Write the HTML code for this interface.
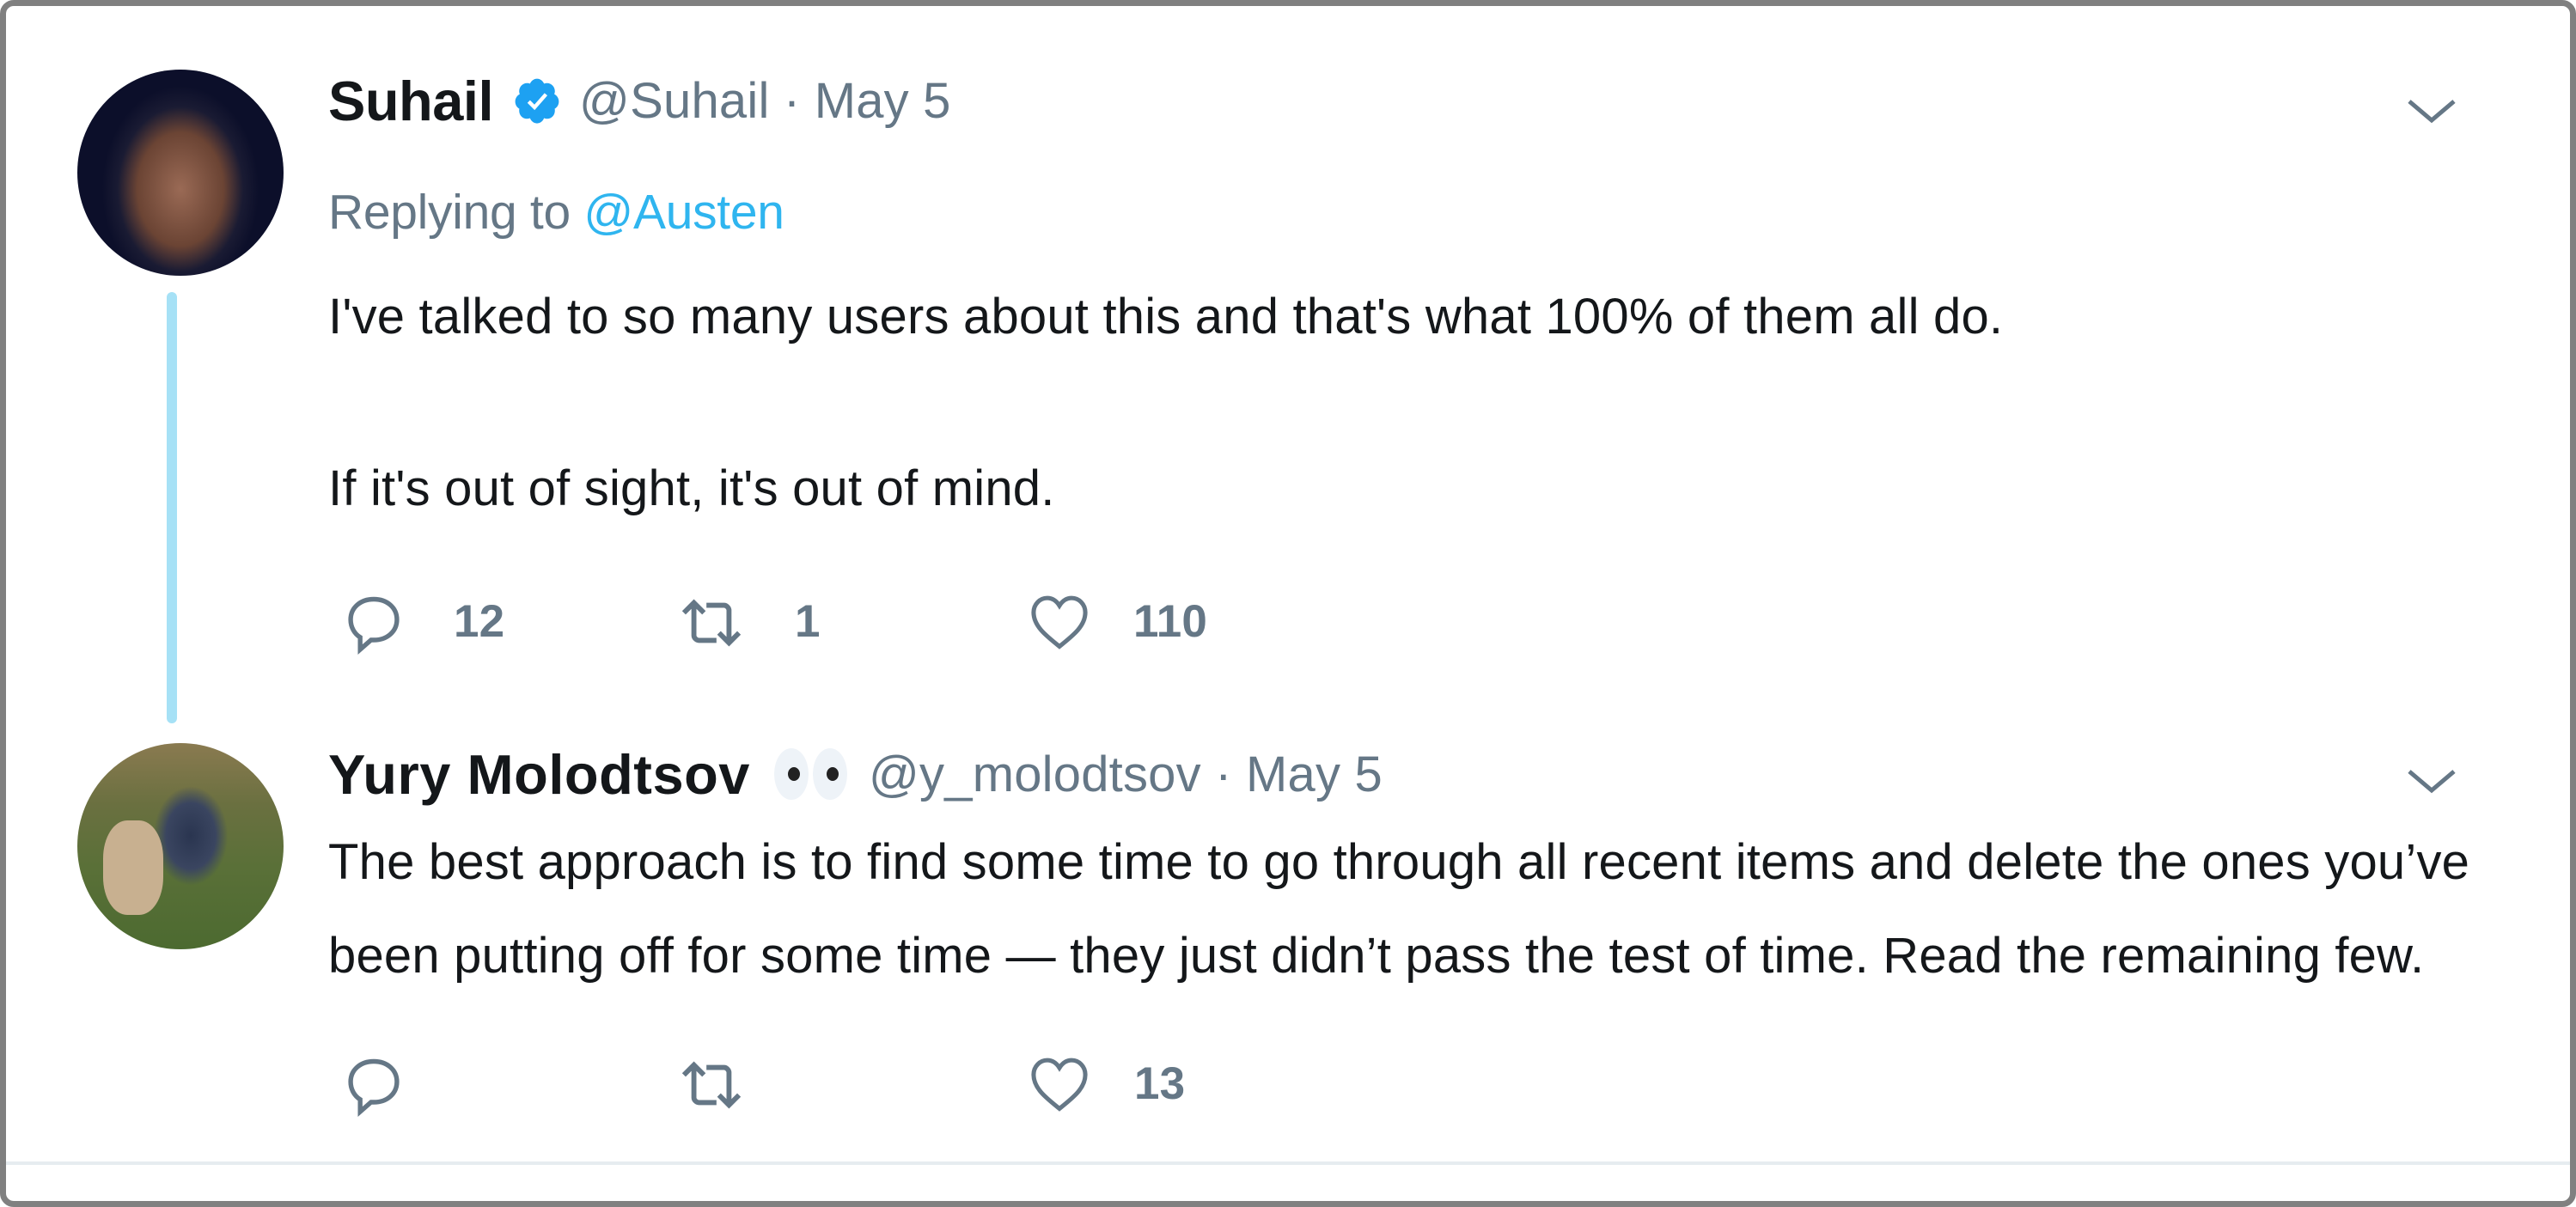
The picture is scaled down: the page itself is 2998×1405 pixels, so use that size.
<!DOCTYPE html>
<html><head><meta charset="utf-8"><style>
html,body{margin:0;padding:0;background:#fff;}
body{width:2998px;height:1405px;position:relative;overflow:hidden;font-family:"Liberation Sans",Arial,sans-serif;}
.frame{position:absolute;left:0;top:0;width:2998px;height:1405px;box-sizing:border-box;border:7px solid #808080;border-radius:16px;}
.t{position:absolute;white-space:nowrap;letter-spacing:0.2px;}
.hdr{position:absolute;white-space:nowrap;display:flex;align-items:center;font-size:58px;letter-spacing:0.2px;}
.name{font-weight:bold;color:#14171a;font-size:65px;letter-spacing:-0.5px;}
.gray{color:#657786;}
.body{color:#14171a;font-size:58px;}
.cnt{font-weight:bold;color:#657786;font-size:53px;}
.av{position:absolute;border-radius:50%;}
</style></head><body>
<div class="frame"></div>

<div class="av" style="left:90px;top:81px;width:240px;height:240px;background:radial-gradient(ellipse 38% 50% at 50% 58%,#9a6a55 0%,#6b4434 55%,#1a1b33 80%,#0c0f2a 100%);"></div>
<div style="position:absolute;left:194px;top:340px;width:12px;height:502px;background:#a6e1f6;border-radius:6px;"></div>

<div class="hdr" style="left:382px;top:84px;height:66px;">
<span class="name">Suhail</span>
<svg style="margin:0 20px 0 22px" width="58" height="58" viewBox="0 0 24 24"><path fill="#1da1f2" d="M22.5 12.5c0-1.6-.9-2.9-2.2-3.6.2-.4.3-.9.3-1.4 0-2.2-1.7-3.9-3.8-3.9-.5 0-1 .1-1.4.3C14.8 2.5 13.5 1.5 12 1.5s-2.8 1-3.4 2.4c-.4-.2-.9-.3-1.4-.3-2.1 0-3.8 1.7-3.8 3.9 0 .5.1 1 .3 1.4-1.3.7-2.2 2-2.2 3.6 0 1.5.8 2.8 2 3.5-.1.3-.1.6-.1.9 0 2.2 1.7 3.9 3.8 3.9.5 0 1-.1 1.4-.3.6 1.5 1.9 2.5 3.4 2.5s2.8-1 3.4-2.5c.4.2.9.3 1.4.3 2.1 0 3.8-1.7 3.8-3.9 0-.3 0-.6-.1-.9 1.2-.7 2-2 2-3.5z"/><path fill="none" stroke="#fff" stroke-width="1.8" d="M8 12.5l2.8 2.8L16.3 9"/></svg>
<span class="gray">@Suhail · May 5</span>
</div>
<svg style="position:absolute;left:2800px;top:112px" width="60" height="32" viewBox="0 0 60 32"><path d="M4 6l26 22L56 6" fill="none" stroke="#657786" stroke-width="5"/></svg>

<div class="t gray" style="left:382px;top:214px;font-size:57px;letter-spacing:-0.3px;">Replying to <span style="color:#2fb5ef">@Austen</span></div>
<div class="t body" style="left:382px;top:335px;">I've talked to so many users about this and that's what 100% of them all do.</div>
<div class="t body" style="left:382px;top:535px;">If it's out of sight, it's out of mind.</div>

<svg style="position:absolute;left:397px;top:688px" width="76" height="76" viewBox="0 0 24 24"><path fill="none" stroke="#657786" stroke-width="1.7" d="M12 3c5 0 8.5 3.2 8.5 7.5S17 18 12 18h-1l-4 3.5V17C5 15.8 3.5 13.4 3.5 10.5 3.5 6.2 7 3 12 3z"/></svg>
<div class="t cnt" style="left:528px;top:693px;">12</div>
<svg style="position:absolute;left:786px;top:690px" width="84" height="70" viewBox="0 0 28 24"><path fill="none" stroke="#657786" stroke-width="2" d="M3 8l4-4 4 4M7 4v13c0 1 1 2 2 2h7M25 16l-4 4-4-4M21 20V7c0-1-1-2-2-2h-7"/></svg>
<div class="t cnt" style="left:925px;top:693px;">1</div>
<svg style="position:absolute;left:1193px;top:686px" width="80" height="76" viewBox="0 0 24 24"><path fill="none" stroke="#657786" stroke-width="1.6" d="M12 21C7 17 2.5 13.5 2.5 8.5 2.5 5.5 4.8 3.2 7.5 3.2c2 0 3.5 1.2 4.5 2.8 1-1.6 2.5-2.8 4.5-2.8 2.7 0 5 2.3 5 5.3 0 5-4.5 8.5-9.5 12.5z"/></svg>
<div class="t cnt" style="left:1319px;top:693px;">110</div>

<div class="av" style="left:90px;top:865px;width:240px;height:240px;background:radial-gradient(ellipse 30% 40% at 55% 45%,#2a3550 0%,#3a4560 40%,transparent 60%),linear-gradient(180deg,#8a7a50 0%,#6a7040 30%,#5a7038 60%,#4c6a30 100%);"></div>
<div class="av" style="left:120px;top:955px;width:70px;height:110px;border-radius:40%;background:#c8b090;"></div>

<div class="hdr" style="left:382px;top:868px;height:66px;">
<span class="name" style="letter-spacing:0.5px">Yury Molodtsov</span>
<span style="position:relative;display:inline-block;width:86px;height:64px;margin:0 24px 0 28px;">
<span style="position:absolute;left:0;top:2px;width:40px;height:60px;border-radius:50%;background:#eef3f8;"></span>
<span style="position:absolute;left:45px;top:2px;width:40px;height:60px;border-radius:50%;background:#eef3f8;"></span>
<span style="position:absolute;left:16px;top:24px;width:14px;height:16px;border-radius:50%;background:#222;"></span>
<span style="position:absolute;left:61px;top:24px;width:14px;height:16px;border-radius:50%;background:#222;"></span>
</span>
<span class="gray">@y_molodtsov · May 5</span>
</div>
<svg style="position:absolute;left:2800px;top:892px" width="60" height="32" viewBox="0 0 60 32"><path d="M4 6l26 22L56 6" fill="none" stroke="#657786" stroke-width="5"/></svg>

<div class="t body" style="left:382px;top:970px;">The best approach is to find some time to go through all recent items and delete the ones you’ve</div>
<div class="t body" style="left:382px;top:1079px;">been putting off for some time — they just didn’t pass the test of time. Read the remaining few.</div>

<svg style="position:absolute;left:397px;top:1226px" width="76" height="76" viewBox="0 0 24 24"><path fill="none" stroke="#657786" stroke-width="1.7" d="M12 3c5 0 8.5 3.2 8.5 7.5S17 18 12 18h-1l-4 3.5V17C5 15.8 3.5 13.4 3.5 10.5 3.5 6.2 7 3 12 3z"/></svg>
<svg style="position:absolute;left:786px;top:1228px" width="84" height="70" viewBox="0 0 28 24"><path fill="none" stroke="#657786" stroke-width="2" d="M3 8l4-4 4 4M7 4v13c0 1 1 2 2 2h7M25 16l-4 4-4-4M21 20V7c0-1-1-2-2-2h-7"/></svg>
<svg style="position:absolute;left:1193px;top:1224px" width="80" height="76" viewBox="0 0 24 24"><path fill="none" stroke="#657786" stroke-width="1.6" d="M12 21C7 17 2.5 13.5 2.5 8.5 2.5 5.5 4.8 3.2 7.5 3.2c2 0 3.5 1.2 4.5 2.8 1-1.6 2.5-2.8 4.5-2.8 2.7 0 5 2.3 5 5.3 0 5-4.5 8.5-9.5 12.5z"/></svg>
<div class="t cnt" style="left:1320px;top:1231px;">13</div>

<div style="position:absolute;left:7px;top:1352px;width:2984px;height:4px;background:#e6ecf0;"></div>
</body></html>
